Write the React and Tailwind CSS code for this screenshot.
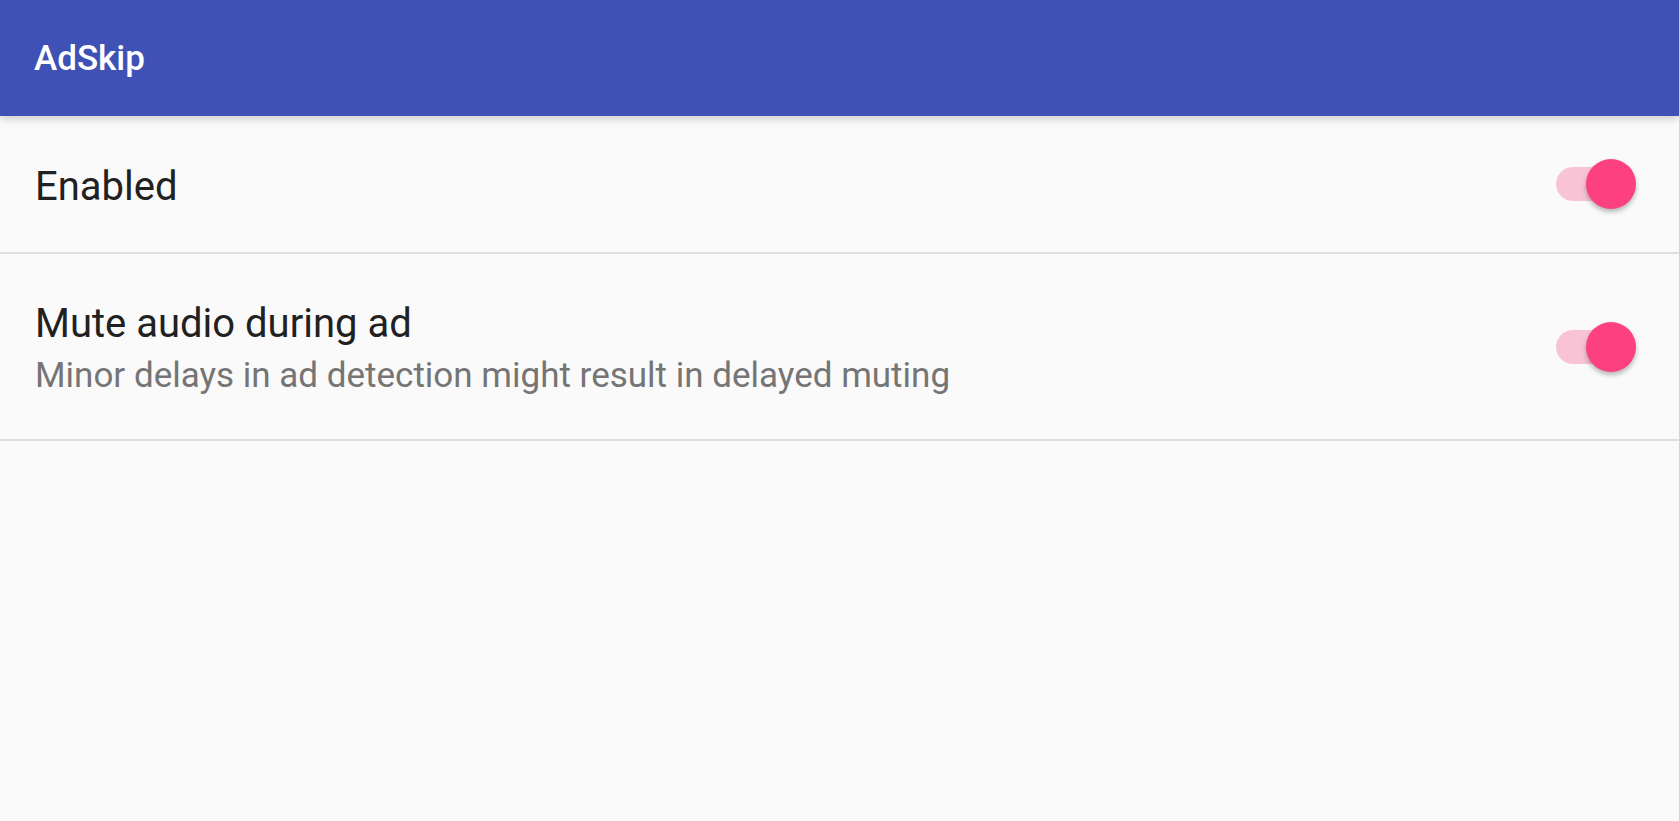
import React from 'react';

// Material style switch, always on in this screen
function Toggle() {
  return (
    <div className="relative w-[80px] h-[50px] shrink-0">
      <div className="absolute left-0 top-[8px] w-[76px] h-[34px] rounded-full bg-[#f9c3d6]" />
      <div className="absolute right-0 top-0 w-[50px] h-[50px] rounded-full bg-[#fd4080] shadow-[0_3px_5px_rgba(0,0,0,0.28)]" />
    </div>
  );
}

export default function App() {
  return (
    <div className="min-h-[821px] bg-[#fafafa] font-['Roboto',sans-serif]">
      {/* App bar */}
      <header className="relative h-[116px] bg-[#3f51b5] flex items-center pl-[34px] shadow-[0_3px_8px_rgba(0,0,0,0.18)]">
        <h1 className="text-[35px] leading-none font-medium text-white">AdSkip</h1>
      </header>

      {/* Enabled */}
      <div className="h-[136px] flex items-center justify-between pl-[35px] pr-[43px]">
        <span className="pt-[6px] text-[40px] leading-none text-[#212121]">Enabled</span>
        <Toggle />
      </div>
      <div className="h-[2px] bg-[#dedede]" />

      {/* Mute audio */}
      <div className="h-[185px] flex items-center justify-between pl-[35px] pr-[43px]">
        <div className="flex flex-col pt-[6px]">
          <span className="text-[40px] leading-[50px] text-[#212121]">Mute audio during ad</span>
          <span className="mt-[2px] text-[35px] leading-[50px] text-[#757575]">
            Minor delays in ad detection might result in delayed muting
          </span>
        </div>
        <Toggle />
      </div>
      <div className="h-[2px] bg-[#dedede]" />
    </div>
  );
}
